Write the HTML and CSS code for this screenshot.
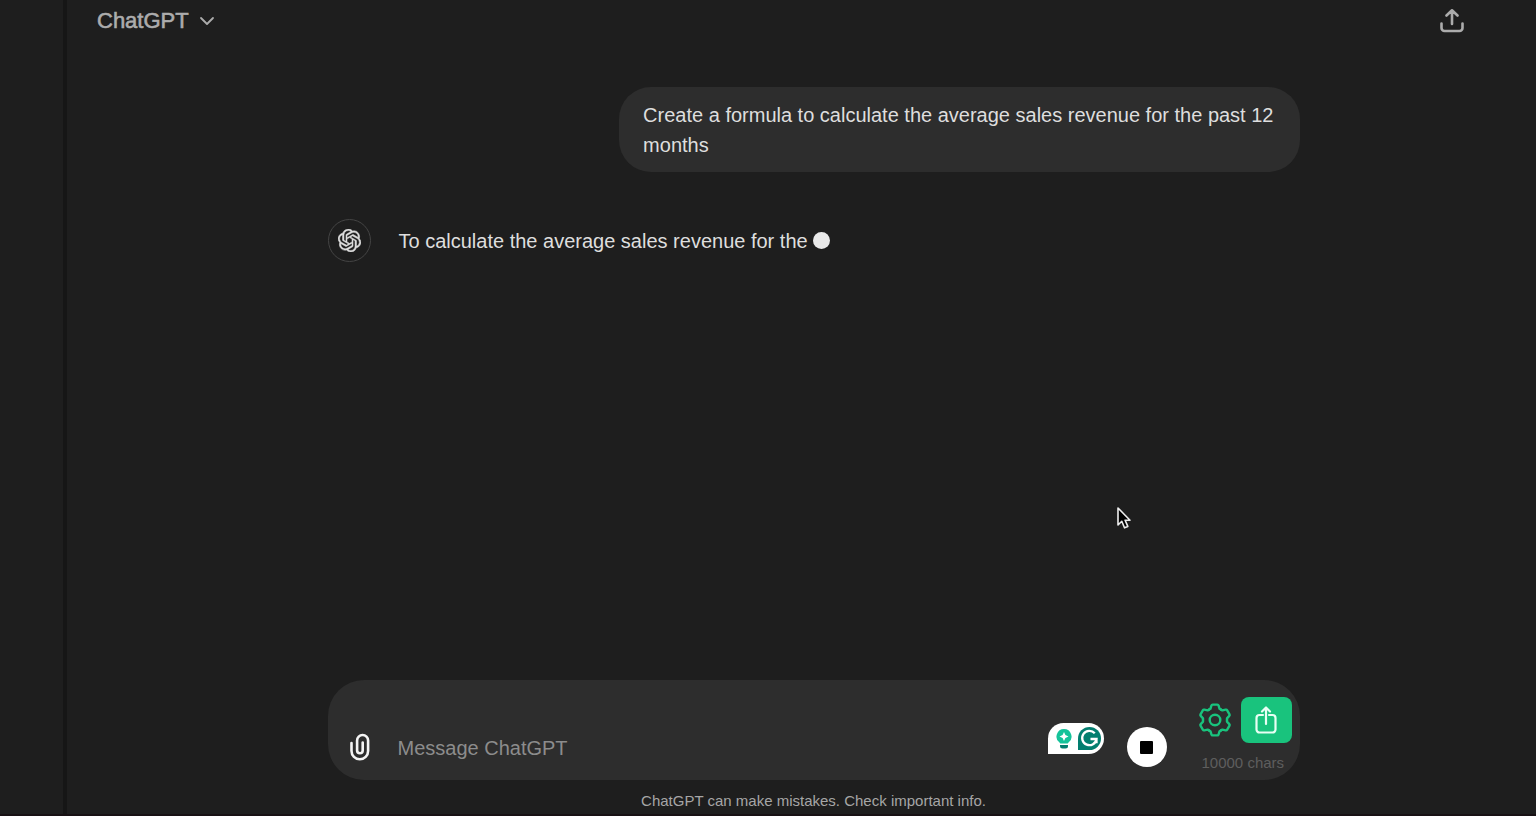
FILE: index.html
```html
<!DOCTYPE html>
<html lang="en">

<head>
	<meta charset="UTF-8">
	<meta name="viewport" content="width=device-width, initial-scale=1.0">
	<title>ChatGPT</title>
	<link rel="stylesheet" href="styles.css">
</head>

<body>
	<aside class="sidebar"></aside>
	<div class="page">
		<header class="header">
			<button class="model" type="button">
				ChatGPT
				<svg width="16" height="16" viewBox="0 0 16 16" fill="none" stroke="currentColor" stroke-width="1.8" stroke-linecap="round" stroke-linejoin="round">
					<path d="M2 5l6 6 6-6" />
				</svg>
			</button>
			<button class="icon-button" type="button" aria-label="Share chat">
				<svg width="24" height="24" viewBox="0 0 24 24" fill="none" stroke="currentColor" stroke-width="2.6" stroke-linecap="round" stroke-linejoin="round">
					<path d="M12 15V2M6.500 6.500L12 1.300l5.500 5.200M1.500 14.500v4.500a3 3 0 0 0 3 3h15a3 3 0 0 0 3-3v-4.500" />
				</svg>
			</button>
		</header>

		<main class="chat">
			<div class="thread">
				<div class="question">Create a formula to calculate the average sales revenue for the past 12 months</div>
				<div class="answer">
					<div class="avatar">
						<svg width="23" height="23" viewBox="0 0 24 24" fill="currentColor" stroke="currentColor" stroke-width="0.5">
							<path d="M22.2819 9.8211a5.9847 5.9847 0 0 0-.5157-4.9108 6.0462 6.0462 0 0 0-6.5098-2.9A6.0651 6.0651 0 0 0 4.9807 4.1818a5.9847 5.9847 0 0 0-3.9977 2.9 6.0462 6.0462 0 0 0 .7427 7.0966 5.98 5.98 0 0 0 .511 4.9107 6.051 6.051 0 0 0 6.5146 2.9001A5.9847 5.9847 0 0 0 13.2599 24a6.0557 6.0557 0 0 0 5.7718-4.2058 5.9894 5.9894 0 0 0 3.9977-2.9001 6.0557 6.0557 0 0 0-.7475-7.0729zm-9.022 12.6081a4.4755 4.4755 0 0 1-2.8764-1.0408l.1419-.0804 4.7783-2.7582a.7948.7948 0 0 0 .3927-.6813v-6.7369l2.02 1.1686a.071.071 0 0 1 .038.052v5.5826a4.504 4.504 0 0 1-4.4945 4.4944zm-9.6607-4.1254a4.4708 4.4708 0 0 1-.5346-3.0137l.142.0852 4.783 2.7582a.7712.7712 0 0 0 .7806 0l5.8428-3.3685v2.3324a.0804.0804 0 0 1-.0332.0615L9.74 19.9502a4.4992 4.4992 0 0 1-6.1408-1.6464zM2.3408 7.8956a4.485 4.485 0 0 1 2.3655-1.9728V11.6a.7664.7664 0 0 0 .3879.6765l5.8144 3.3543-2.0201 1.1685a.0757.0757 0 0 1-.071 0l-4.8303-2.7865A4.504 4.504 0 0 1 2.3408 7.872zm16.5963 3.8558L13.1038 8.364 15.1192 7.2a.0757.0757 0 0 1 .071 0l4.8303 2.7913a4.4944 4.4944 0 0 1-.6765 8.1042v-5.6772a.79.79 0 0 0-.407-.667zm2.0107-3.0231l-.142-.0852-4.7735-2.7818a.7759.7759 0 0 0-.7854 0L9.409 9.2297V6.8974a.0662.0662 0 0 1 .0284-.0615l4.8303-2.7866a4.4992 4.4992 0 0 1 6.6802 4.66zM8.3065 12.863l-2.02-1.1638a.0804.0804 0 0 1-.038-.0567V6.0742a4.4992 4.4992 0 0 1 7.3757-3.4537l-.142.0805L8.704 5.459a.7948.7948 0 0 0-.3927.6813zm1.0976-2.3654l2.602-1.4998 2.6069 1.4998v2.9994l-2.5974 1.4997-2.6067-1.4997Z" />
						</svg>
					</div>
					<p class="answer-text">To calculate the average sales revenue for the <span class="typing-dot"></span></p>
				</div>
			</div>

			<form class="composer">
				<button class="icon-button attach" type="button" aria-label="Attach file">
					<svg width="20" height="28" viewBox="0 0 20 28" fill="none" stroke="currentColor" stroke-width="2.6" stroke-linecap="round">
						<path d="M1.500 10v8a8.300 8.300 0 0 0 16.600 0V7.500a5.500 5.500 0 0 0-11 0V17.500a2.800 2.800 0 0 0 5.600 0V9.500" />
					</svg>
				</button>
				<input class="message" type="text" placeholder="Message ChatGPT" aria-label="Message ChatGPT">
				<div class="grammarly">
					<svg width="16" height="20" viewBox="0 0 16 20">
						<path d="M8 0a7.500 7.500 0 0 0-4.500 13.500l.8 1h7.400l.8-1A7.500 7.500 0 0 0 8 0z" fill="#15c39a" />
						<path d="M8 3l1.400 3.100 3.100 1.400-3.100 1.400L8 12 6.600 8.900 3.500 7.500l3.100-1.400z" fill="#fff" />
						<path d="M4 16h8v1a2.500 2.500 0 0 1-2.500 2.500h-3A2.500 2.500 0 0 1 4 17z" fill="#027e6f" />
					</svg>
					<svg width="23" height="23" viewBox="0 0 24 24">
						<path d="M0 24V12a12 12 0 1 1 12 12z" fill="#027e6f" />
						<path d="M17.500 6.500a7.500 7.500 0 1 0 1.800 6H13M19.300 12.500V17" fill="none" stroke="#fff" stroke-width="2.4" />
					</svg>
				</div>
				<button class="stop" type="button" aria-label="Stop generating"></button>
				<div class="tools">
					<div class="tool-buttons">
						<button class="icon-button settings" type="button" aria-label="Settings">
							<svg width="34" height="34" viewBox="-17 -17 34 34" fill="none" stroke="currentColor" stroke-width="2.4" stroke-linecap="round" stroke-linejoin="round">
								<defs>
									<path id="tooth" d="M-6-10.400L-4.600-11.200-3.600-14.400Q-3.300-15.400-2.300-15.400H2.300Q3.300-15.400 3.600-14.400L4.600-11.200 6-10.400" />
								</defs>
								<use href="#tooth" />
								<use href="#tooth" transform="rotate(60)" />
								<use href="#tooth" transform="rotate(120)" />
								<use href="#tooth" transform="rotate(180)" />
								<use href="#tooth" transform="rotate(240)" />
								<use href="#tooth" transform="rotate(300)" />
								<circle r="5.300" />
							</svg>
						</button>
						<button class="send-file" type="button" aria-label="Submit file">
							<svg width="22" height="28" viewBox="0 0 22 28" fill="none" stroke="currentColor" stroke-width="2.200" stroke-linecap="round" stroke-linejoin="round">
								<path d="M8 9H4.500A3 3 0 0 0 1.500 12v11.500a3 3 0 0 0 3 3h13a3 3 0 0 0 3-3V12a3 3 0 0 0-3-3H14M11 18V2M7 5.500l4-4 4 4" />
							</svg>
						</button>
					</div>
					<span class="chars">10000 chars</span>
				</div>
			</form>
			<p class="note">ChatGPT can make mistakes. Check important info.</p>
		</main>
	</div>

	<svg class="cursor" width="16" height="24" viewBox="0 0 16 24">
		<path d="M2 2v17l3.800-3.700 2.700 6.500 3.300-1.400-2.700-6.200H14z" fill="#000" stroke="#eee" stroke-width="1.600" stroke-linejoin="round" />
	</svg>
</body>

</html>
```

FILE: styles.css
```css
* {
	box-sizing: border-box;
}

body {
	display: flex;
	min-height: 100vh;
	margin: 0;
	background: #1e1e1e;
	border-bottom: 2px solid #181114;
	color: #dedede;
	font-family: "Liberation Sans", Arial, sans-serif;
	font-size: 20px;
	line-height: 30px;
}

button,
input {
	padding: 0;
	border: none;
	background: none;
	color: inherit;
	font: inherit;
}

button {
	cursor: pointer;
}

svg {
	display: block;
}

p {
	margin: 0;
}

.sidebar {
	width: 67px;
	border-right: 4px solid #161616;
}

.page {
	display: flex;
	flex: 1;
	flex-direction: column;
}

.header {
	display: flex;
	align-items: center;
	justify-content: space-between;
	height: 42px;
	padding: 0 72px 0 30px;
	color: #acacac;
}

.model {
	display: flex;
	align-items: center;
	gap: 10px;
	font-size: 22px;
	-webkit-text-stroke: 0.6px;
}

.icon-button {
	display: flex;
}

.chat {
	display: flex;
	flex: 1;
	flex-direction: column;
	width: 100%;
	max-width: 996px;
	margin: 0 auto;
	padding-left: 24px;
}

.thread {
	flex: 1;
	padding-top: 45px;
}

.question {
	width: 70%;
	margin-left: auto;
	padding: 13px 24px 12px;
	border-radius: 32px;
	background: #2d2d2d;
}

.answer {
	display: flex;
	align-items: center;
	gap: 28px;
	margin-top: 47px;
}

.avatar {
	display: flex;
	align-items: center;
	justify-content: center;
	width: 43px;
	height: 43px;
	border: 1px solid #444;
	border-radius: 50%;
}

.typing-dot {
	display: inline-block;
	width: 17px;
	height: 17px;
	border-radius: 50%;
	background: #e9e9e9;
	vertical-align: -1px;
}

.composer {
	display: flex;
	align-items: center;
	height: 100px;
	padding: 0 8px 0 22px;
	border-radius: 36px;
	background: #2d2d2d;
}

.attach {
	margin: 34px 28px 0 0;
	color: #f4f4f4;
}

.message {
	flex: 1;
	min-width: 0;
	margin-top: 36px;
	outline: none;
}

.message::placeholder {
	color: #8c8c8c;
	opacity: 1;
}

.grammarly {
	display: flex;
	align-items: center;
	gap: 6px;
	width: 56px;
	height: 31px;
	margin: 17px 23px 0 0;
	padding-left: 8px;
	border-radius: 16px 16px 16px 0;
	background: #fff;
}

.stop {
	display: flex;
	align-items: center;
	justify-content: center;
	width: 40px;
	height: 40px;
	margin: 34px 31px 0 0;
	border-radius: 50%;
	background: #fff;
}

.stop::before {
	width: 13px;
	height: 13px;
	border-radius: 1px;
	background: #000;
	content: "";
}

.tools {
	display: flex;
	flex-direction: column;
	gap: 10px;
	padding-top: 10px;
}

.tool-buttons {
	display: flex;
	align-items: center;
	gap: 9px;
}

.settings {
	color: #19c37d;
}

.send-file {
	display: flex;
	align-items: center;
	justify-content: center;
	width: 51px;
	height: 46px;
	border-radius: 8px;
	background: #19c37d;
	color: #e8fff4;
}

.chars {
	padding-left: 4px;
	color: #5e5e5e;
	font-size: 15px;
	line-height: 20px;
}

.note {
	padding: 11px 0 3px;
	color: #a6a6a6;
	font-size: 15px;
	line-height: 20px;
	text-align: center;
}

.cursor {
	position: absolute;
	top: 506px;
	left: 1116px;
}
```
